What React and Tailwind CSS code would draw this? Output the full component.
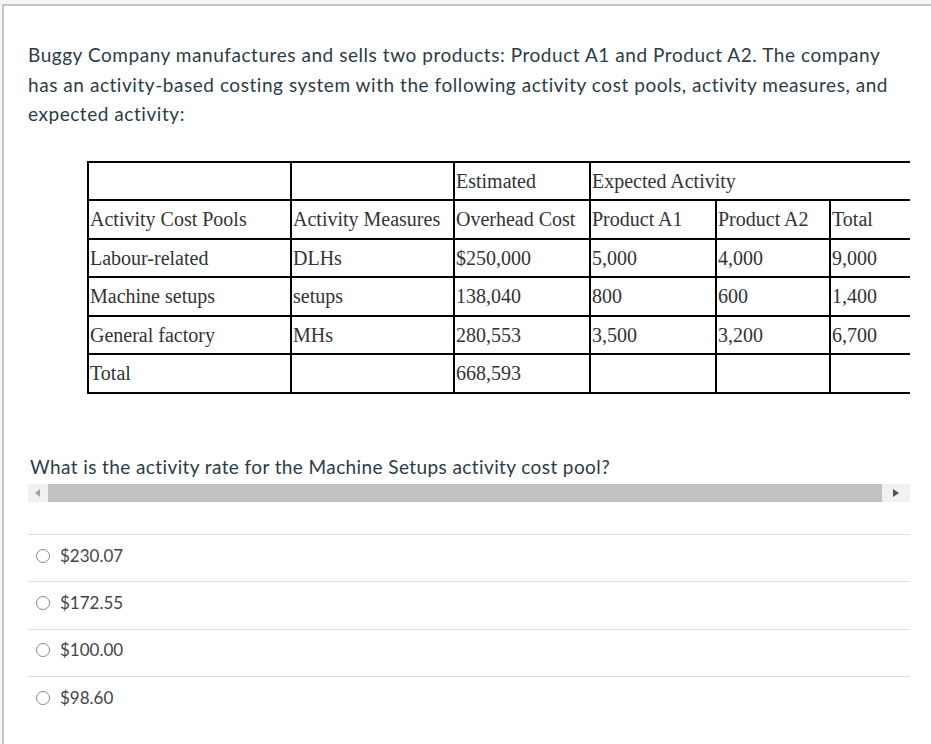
import React from 'react';

const rows = [
  ['Labour-related', 'DLHs', '$250,000', '5,000', '4,000', '9,000'],
  ['Machine setups', 'setups', '138,040', '800', '600', '1,400'],
  ['General factory', 'MHs', '280,553', '3,500', '3,200', '6,700'],
  ['Total', '', '668,593', '', '', ''],
];

const answers = ['$230.07', '$172.55', '$100.00', '$98.60'];

const cell = 'border-2 border-black pl-[1px] pr-[2px] h-[38.5px] align-middle text-left font-normal whitespace-nowrap';

const App = () => {
  return (
    <div className="min-h-[744px] bg-[#f5f5f5] pt-[4px] pl-[2px]">
      <div
        className="min-h-[740px] bg-white border-l-2 border-t-2 border-[#c4c4c4] text-[#2d3b45]"
        style={{ fontFamily: 'Lato, "Liberation Sans", sans-serif' }}
      >
        <div className="pl-[24px] pr-[22px]">
          <p className="pt-[34px] text-[19px] leading-[29.5px] tracking-[0.55px] max-w-[880px]">
            Buggy Company manufactures and sells two products: Product A1 and Product A2. The company has an activity-based costing system with the following activity cost pools, activity measures, and expected activity:
          </p>

          <div className="mt-[32px] w-[882px] overflow-hidden">
            <table
              className="ml-[59px] border-collapse text-[20px] text-[#333] table-fixed"
              style={{ fontFamily: '"Liberation Serif", "Times New Roman", serif', width: '880px' }}
            >
              <colgroup>
                <col className="w-[203px]" />
                <col className="w-[163px]" />
                <col className="w-[136px]" />
                <col className="w-[126px]" />
                <col className="w-[114px]" />
                <col className="w-[138px]" />
              </colgroup>
              <thead>
                <tr>
                  <th className={cell}></th>
                  <th className={cell}></th>
                  <th className={cell}>Estimated</th>
                  <th className={cell} colSpan={3}>Expected Activity</th>
                </tr>
                <tr>
                  <th className={cell}>Activity Cost Pools</th>
                  <th className={cell}>Activity Measures</th>
                  <th className={cell}>Overhead Cost</th>
                  <th className={cell}>Product A1</th>
                  <th className={cell}>Product A2</th>
                  <th className={cell}>Total</th>
                </tr>
              </thead>
              <tbody>
                {rows.map((r, i) => (
                  <tr key={i}>
                    {r.map((v, j) => (
                      <td key={j} className={cell}>{v}</td>
                    ))}
                  </tr>
                ))}
              </tbody>
            </table>
          </div>

          <p className="mt-[58px] text-[19px] leading-[29.5px] tracking-[0.4px] pl-[2px]">
            What is the activity rate for the Machine Setups activity cost pool?
          </p>

          {/* fake horizontal scrollbar */}
          <div className="mt-[3px] w-[882px] h-[18px] bg-[#f1f1f1] flex items-center">
            <div className="w-[20px] flex justify-center">
              <svg width="6" height="8" viewBox="0 0 6 8"><path d="M5 0 L0 4 L5 8 Z" fill="#a3a3a3" /></svg>
            </div>
            <div className="flex-1 h-[18px] bg-[#c1c1c1]"></div>
            <div className="w-[28px] flex justify-center">
              <svg width="6" height="8" viewBox="0 0 6 8"><path d="M0 0 L6 4 L0 8 Z" fill="#505050" /></svg>
            </div>
          </div>

          <div className="mt-[32px] w-[882px]">
            {answers.map((a) => (
              <div key={a} className="border-t border-[#dcdcdc] h-[47.3px] flex items-center pb-[5px] pl-[8px] gap-[10px] text-[17px] text-[#444]">
                <span className="w-[14px] h-[14px] rounded-full border border-[#8a8a8a] bg-white"></span>
                <span>{a}</span>
              </div>
            ))}
          </div>
        </div>
      </div>
    </div>
  );
};

export default App;
